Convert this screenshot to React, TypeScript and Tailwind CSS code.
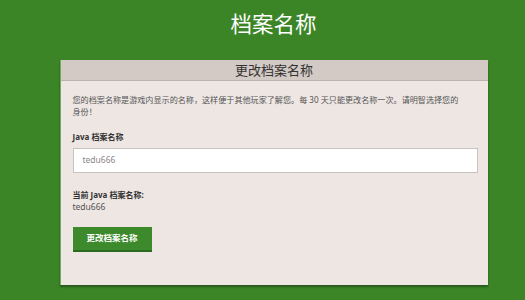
export default function App() {
  return (
    <div
      className="min-h-screen w-full bg-[#3b8527] flex flex-col items-center pl-[22px]"
      style={{ fontFamily: '"Noto Sans", "Noto Sans CJK SC", sans-serif' }}
    >
      <h1 className="mt-[9px] text-[21.5px] leading-[30px] text-white">档案名称</h1>

      <div className="mt-[21px] w-[428px] bg-[#ede6e3] border-l border-[#6fae5a] shadow-[0_2px_2px_rgba(0,0,0,0.35)]">
        <div className="h-[21px] bg-[#d3c9c5] border-b border-[#bdb3af] flex items-center justify-center">
          <span className="text-[13px] leading-none text-[#333]">更改档案名称</span>
        </div>

        <div className="pl-[12px] pr-[10px] pt-[13px] pb-[33px]">
          <p className="mr-[12px] text-[8.1px] leading-[12px] text-[#555]">
            您的档案名称是游戏内显示的名称，这样便于其他玩家了解您。每 30 天只能更改名称一次。请明智选择您的身份！
          </p>

          <div className="mt-[13px] text-[8px] leading-[12px] font-bold text-[#333]">Java 档案名称</div>
          <div className="mt-[5px] h-[25px] bg-white border border-[#c9c2bf] flex items-center px-[9px]">
            <span className="text-[8.5px] text-[#888]">tedu666</span>
          </div>

          <div className="mt-[16px] text-[8px] leading-[12px] font-bold text-[#333]">当前 Java 档案名称:</div>
          <div className="text-[8.5px] leading-[11px] text-[#555]">tedu666</div>

          <button className="mt-[15px] w-[79px] h-[25px] bg-[#3c8a2c] border-b-2 border-[#2c6a1e] text-white text-[8.5px] font-bold">
            更改档案名称
          </button>
        </div>
      </div>
    </div>
  );
}
